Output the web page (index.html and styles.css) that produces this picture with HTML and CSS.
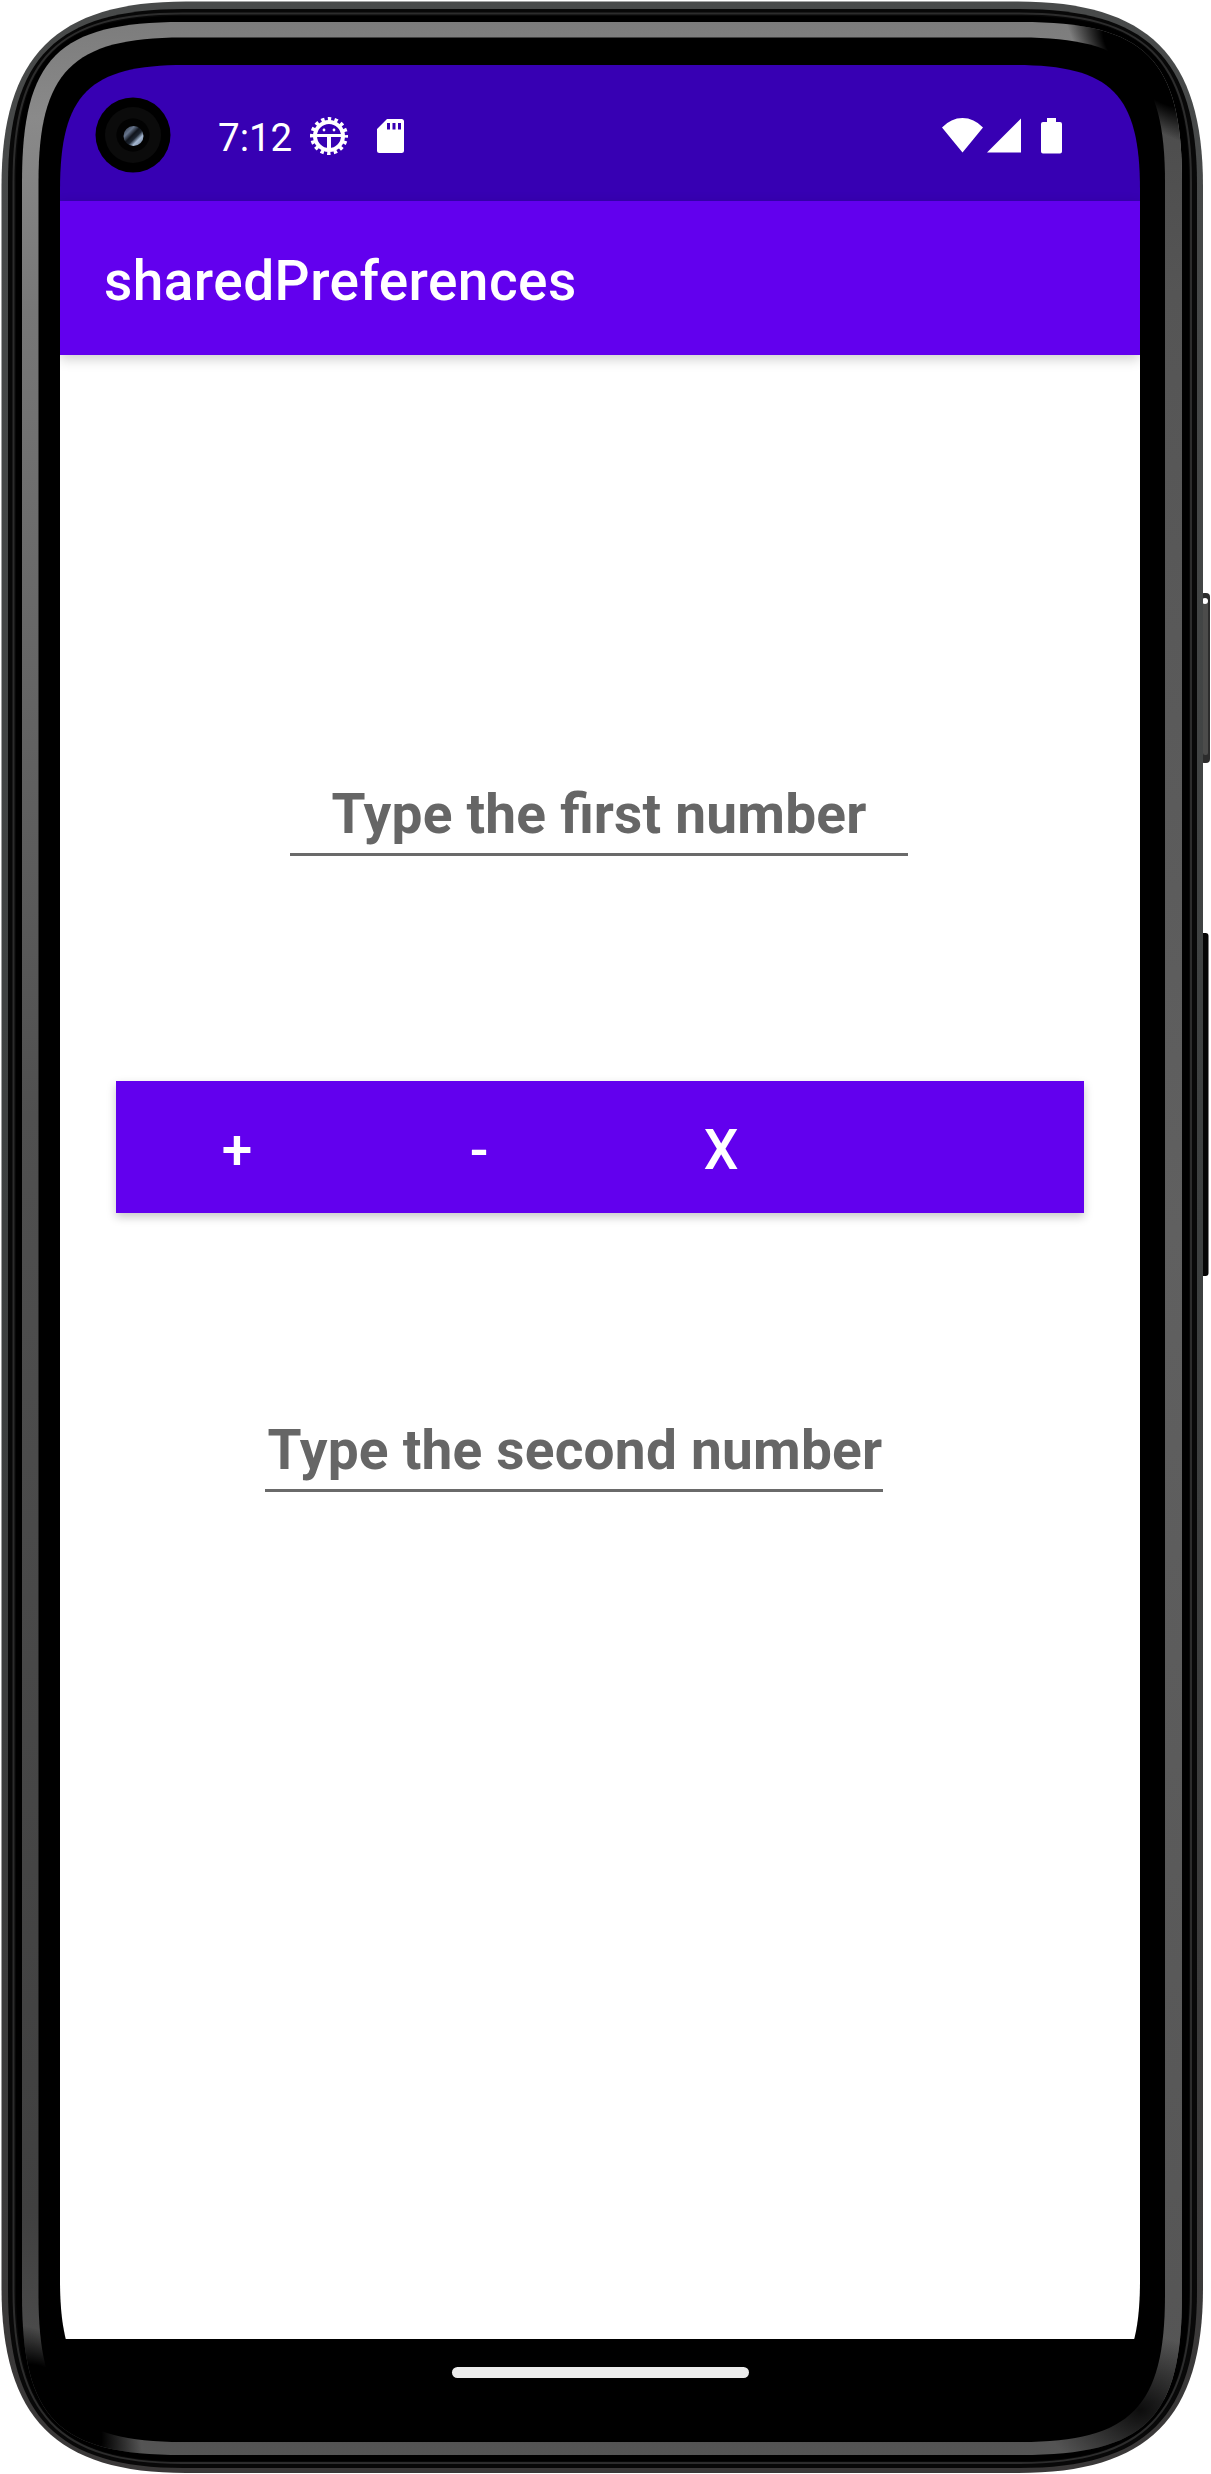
FILE: index.html
```html
<!DOCTYPE html>
<html lang="en">
<head>
<meta charset="utf-8">
<title>sharedPreferences</title>
<link rel="stylesheet" href="styles.css">
</head>
<body>
<div class="phone">
  <svg class="frame" viewBox="0 0 1211 2474" aria-hidden="true">
    <defs>
      <linearGradient id="edge" x1="0" y1="0" x2="0" y2="1">
        <stop offset="0" stop-color="#484a4a"/><stop offset=".5" stop-color="#3d4040"/><stop offset="1" stop-color="#3a3838"/>
      </linearGradient>
      <linearGradient id="ring" gradientUnits="userSpaceOnUse" x1="0" y1="20" x2="0" y2="2456">
        <stop offset="0" stop-color="#7c7c7c"/><stop offset=".04" stop-color="#8a8a8a"/><stop offset=".12" stop-color="#777"/><stop offset=".45" stop-color="#505050"/><stop offset=".9" stop-color="#404040"/><stop offset="1" stop-color="#555"/>
      </linearGradient>
      <linearGradient id="ringRight" x1="0" y1="0" x2="0" y2="1">
        <stop offset="0" stop-color="#4a4a4a"/><stop offset=".1" stop-color="#555"/><stop offset=".5" stop-color="#606060"/><stop offset="1" stop-color="#555"/>
      </linearGradient>
      <radialGradient id="fade">
        <stop offset="0" stop-color="#000"/><stop offset=".55" stop-color="#000"/><stop offset="1" stop-color="#000" stop-opacity="0"/>
      </radialGradient>
      <radialGradient id="dim">
        <stop offset="0" stop-color="#000" stop-opacity=".85"/><stop offset="1" stop-color="#000" stop-opacity="0"/>
      </radialGradient>
      <clipPath id="ringClip">
        <path d="M22 182C22 58 58 22 182 22H1021C1145 22 1182 58 1182 182V2295C1182 2419 1145 2455 1021 2455H182C58 2455 22 2419 22 2295Z"/>
      </clipPath>
    </defs>
    <rect x="1200" y="593" width="10" height="170" rx="4" fill="#2c2c2c"/>
    <rect x="1203" y="600" width="5" height="155" rx="2" fill="#4c4c4b"/>
    <circle cx="1205" cy="601" r="3" fill="#fff"/>
    <rect x="1200" y="933" width="8.500" height="343" rx="3" fill="#050505"/>
    <path fill="url(#edge)" d="M1.500 186C1.500 56 56 1.500 186 1.500H1018C1148 1.500 1203 56 1203 186V2288C1203 2418 1148 2473 1018 2473H186C56 2473 1.500 2418 1.500 2288Z"/>
    <path fill="#080808" d="M8 184C8 57 57 9 184 9H1019C1146 9 1197 57 1197 184V2290C1197 2417 1146 2468 1019 2468H184C57 2468 8 2417 8 2290Z"/>
    <path fill="none" stroke="#2c2c2c" stroke-width="2" d="M13.500 182C13.500 58 58 13.500 182 13.500H1020C1144 13.500 1191 58 1191 182V2290C1191 2414 1144 2463 1020 2463H182C58 2463 13.500 2414 13.500 2290Z"/>
    <path fill="#000" d="M16 182C16 58 58 16 182 16H1020C1144 16 1189 58 1189 182V2290C1189 2414 1144 2461 1020 2461H182C58 2461 16 2414 16 2290Z"/>
    <g clip-path="url(#ringClip)">
      <path fill="url(#ring)" d="M22 22H1182V2456H22Z"/>
      <path fill="url(#ringRight)" d="M1120 60H1182V2400H1120Z"/>
      <ellipse cx="1150" cy="60" rx="110" ry="52" fill="url(#fade)" transform="rotate(45 1150 60)"/>
      <ellipse cx="52" cy="2414" rx="110" ry="65" fill="url(#fade)" transform="rotate(45 52 2414)"/>
      <ellipse cx="1140" cy="2410" rx="95" ry="75" fill="url(#dim)"/>
    </g>
    <path fill="#000" d="M38.500 182C38.500 72 72 37.500 182 37.500H1021C1131 37.500 1165 72 1165 182V2295C1165 2407 1131 2442 1021 2442H182C72 2442 38.500 2407 38.500 2295Z"/>
  </svg>

  <main class="screen">
    <header class="status">
      <span class="clock">7:12</span>
      <svg class="gear" viewBox="-20 -20 40 40" aria-hidden="true">
        <circle r="14" fill="none" stroke="#fff" stroke-width="4"/>
        <circle r="17" fill="none" stroke="#fff" stroke-width="4" stroke-dasharray="3.400 3.276" stroke-dashoffset="1.700"/>
        <path d="M-13-2H13V1H2V14H-2V1H-13Z" fill="#fff"/>
        <circle cx="-5" cy="-6" r="1.400" fill="#fff"/><circle cx="5" cy="-6" r="1.400" fill="#fff"/>
      </svg>
      <svg class="card" viewBox="0 0 27 34" aria-hidden="true">
        <path fill="#fff" fill-rule="evenodd" d="M10 0H24.500Q27 0 27 2.500V31.500Q27 34 24.500 34H2.500Q0 34 0 31.500V10ZM10 4V10.500H13V4ZM15.500 4V10.500H18.500V4ZM21 4V10.500H24V4Z"/>
      </svg>
      <svg class="signals" viewBox="0 0 121 36" aria-hidden="true">
        <path fill="#fff" d="M0 9.500Q9 0 20.500 0T41 9.500L20.500 34.500ZM79 .500V34.500H45ZM105 0H114V4H118Q120 4 120 6V33.500Q120 35.500 118 35.500H101Q99 35.500 99 33.500V6Q99 4 101 4H105Z"/>
      </svg>
    </header>
    <div class="appbar"><h1 class="title">sharedPreferences</h1></div>
    <section class="content">
      <div class="field">Type the <span class="liga">fi</span>rst number</div>
      <div class="operations">
        <button class="op" type="button">+</button>
        <button class="op" type="button">-</button>
        <button class="op" type="button">X</button>
        <button class="op" type="button"></button>
      </div>
      <div class="field field-second">Type the second number</div>
    </section>
    <footer class="navbar"><span class="home"></span></footer>
  </main>

  <svg class="camera" viewBox="-38 -38 76 76" aria-hidden="true">
    <defs>
      <linearGradient id="lens" x1="0" y1="0" x2="1" y2="1">
        <stop offset="0" stop-color="#26303f"/><stop offset=".28" stop-color="#67758c"/><stop offset=".45" stop-color="#10141c"/><stop offset=".58" stop-color="#1c2430"/><stop offset=".72" stop-color="#a5b8d2"/><stop offset="1" stop-color="#5d6c82"/>
      </linearGradient>
    </defs>
    <circle r="37.500"/><circle r="28" fill="#0b0b0b"/><circle r="16.500" fill="#020202"/>
    <circle cx=".5" cy="1" r="10" fill="url(#lens)"/>
  </svg>
</div>
</body>
</html>
```
FILE: styles.css
```css
* { box-sizing: border-box; }

body {
  margin: 0;
  background: #fff;
  font-family: Roboto, "Liberation Sans", sans-serif;
}

.phone {
  position: relative;
  width: 1211px;
  height: 2474px;
  padding: 65px 71px 69px 60px;
  overflow: hidden;
}

.frame {
  position: absolute;
  inset: 0;
  width: 1211px;
  height: 2474px;
}

.screen {
  position: relative;
  display: flex;
  flex-direction: column;
  width: 1080px;
  height: 2340px;
  background: #000;
  clip-path: path("M0 125C0 29 29 0 125 0H955C1051 0 1080 29 1080 125V2215C1080 2311 1051 2340 955 2340H125C29 2340 0 2311 0 2215Z");
}

.status {
  display: flex;
  align-items: center;
  height: 136px;
  padding: 6px 77px 0 158px;
  background: #3700b3;
  color: #fff;
}

.clock {
  width: 91px;
  padding-top: 2px;
  font-size: 38.5px;
  line-height: 45px;
}

.gear { width: 40px; height: 40px; }
.card { width: 27px; height: 34px; margin-left: 28px; }
.signals { width: 121px; height: 36px; margin-left: auto; }

.appbar {
  position: relative;
  display: flex;
  align-items: center;
  height: 154px;
  padding: 6px 44px 0;
  background: #6200ee;
  color: #fff;
  box-shadow: 0 4px 12px rgba(0, 0, 0, .2);
}

.title {
  margin: 0;
  font-size: 55px;
  font-weight: 500;
  line-height: 64px;
  letter-spacing: .45px;
}

.content {
  flex: 1;
  display: flex;
  flex-direction: column;
  padding: 426px 56px 0;
  background: #fff;
}

.field {
  width: 618px;
  height: 75px;
  margin-left: 174px;
  border-bottom: 3px solid #6a6a6a;
  color: #666;
  font-size: 55px;
  font-weight: 700;
  line-height: 67px;
  letter-spacing: .22px;
  text-align: center;
  white-space: nowrap;
}

.liga { letter-spacing: 0; }

.operations {
  display: grid;
  grid-template-columns: repeat(4, 1fr);
  height: 132px;
  margin-top: 225px;
  background: #6200ee;
  box-shadow: 0 4px 9px rgba(0, 0, 0, .22);
}

.op {
  padding: 5px 0 0;
  border: 0;
  background: transparent;
  color: #fff;
  font: 500 55px/64px Roboto, "Liberation Sans", sans-serif;
}

.field-second {
  margin-top: 204px;
  margin-left: 149px;
  padding-left: 2px;
}

.navbar {
  display: flex;
  justify-content: center;
  align-items: center;
  height: 66px;
  background: #000;
}

.home {
  width: 297px;
  height: 11px;
  border-radius: 6px;
  background: #ececec;
}

.camera {
  position: absolute;
  left: 94.5px;
  top: 96.5px;
  width: 76px;
  height: 76px;
}
```
